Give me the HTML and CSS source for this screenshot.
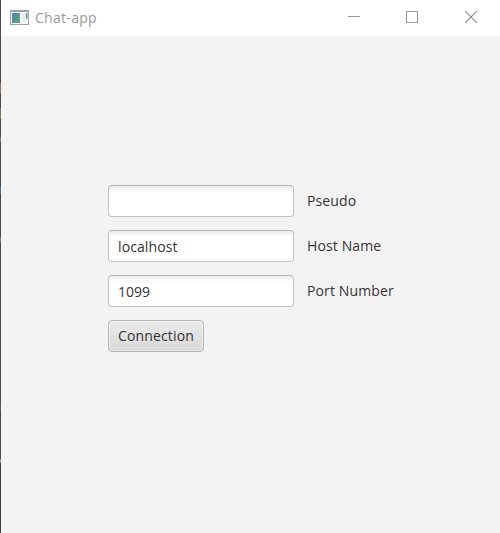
FILE: index.html
```html
<!DOCTYPE html>
<html lang="en">
<head>
<meta charset="utf-8">
<title>Chat-app</title>
<link rel="stylesheet" href="styles.css">
</head>
<body>
<div class="window">
  <header class="titlebar">
    <svg class="app-icon" width="19" height="15" viewBox="0 0 19 15">
      <defs><linearGradient id="tile" x1="0" y1="0" x2="1" y2="1"><stop offset="0" stop-color="#4f80ad"/><stop offset="1" stop-color="#5fa877"/></linearGradient></defs>
      <rect x=".5" y=".5" width="18" height="14" fill="#f6f8f9" stroke="#a0a3a9"/>
      <path d="M0 1h19" stroke="#a0a3a9" stroke-width="2"/>
      <rect x="2" y="3" width="8" height="10" fill="url(#tile)"/>
      <rect x="12" y="4" width="4" height="8" fill="#e7eaed"/>
      <rect x="16" y="3" width="1.5" height="6" fill="#5e9aa3"/>
    </svg>
    <span class="title">Chat-app</span>
    <div class="controls">
      <svg class="minimize" width="12" height="12" viewBox="0 0 12 12"><path d="M0 5.5h12" stroke="#999"/></svg>
      <svg width="12" height="12" viewBox="0 0 12 12"><rect x=".5" y=".5" width="11" height="11" fill="none" stroke="#999"/></svg>
      <svg width="12" height="12" viewBox="0 0 12 12"><path d="M0 0l12 12M12 0L0 12" stroke="#8c8c8c" stroke-width="1.1"/></svg>
    </div>
  </header>
  <main class="form">
    <input class="field" id="pseudo" type="text"><label class="label" for="pseudo">Pseudo</label>
    <input class="field host-field" id="host" type="text" value="localhost"><label class="label" for="host">Host Name</label>
    <input class="field" id="port" type="text" value="1099"><label class="label" for="port">Port Number</label>
    <button class="connect" type="button">Connection</button>
  </main>
</div>
</body>
</html>
```
FILE: styles.css
```css
* { box-sizing: border-box; }
body {
  margin: 0;
  height: 533px;
  padding-left: 1px;
  overflow: hidden;
  background: linear-gradient(#48494b 0 83px, #83715e 83px 94px, #48494b 94px 108px, #83715e 108px 119px, #48494b 119px 137px, #6e7c80 137px 142px, #48494b 142px 186px, #496c88 186px 194px, #48494b 194px 237px, #77746a 237px 242px, #48494b 242px 402px, #59595b 402px 412px, #48494b 412px 459px, #8290a0 459px 463px, #414143 463px);
  font: 14px/20px "Open Sans", "Noto Sans", sans-serif;
  color: #333;
}
.window { height: 533px; background: #f3f3f3; }
.titlebar {
  display: flex;
  align-items: center;
  height: 36px;
  padding: 0 23px 2px 9px;
  background: #fff;
}
.app-icon { margin-right: 6px; }
.title { padding-top: 2px; color: #999; letter-spacing: .3px; }
.controls { display: flex; gap: 47px; margin-left: auto; }
.controls svg { display: block; }
.controls .minimize { margin-right: -1px; }
.form {
  display: grid;
  grid-template-columns: 186px auto;
  grid-auto-rows: 32px;
  gap: 13px;
  padding: 149px 0 0 107px;
  align-items: center;
  justify-content: start;
}
.label { letter-spacing: .12px; }
.field {
  width: 186px;
  height: 32px;
  padding: 1px 9px 0;
  border: 1px solid #c2c2c2;
  border-top-color: #b4b4b4;
  border-radius: 4px;
  background: linear-gradient(#ececec, #fff 6px);
  font: inherit;
  color: inherit;
  outline: none;
}
.host-field { letter-spacing: .1px; }
.connect {
  width: 96px;
  height: 32px;
  padding: 0;
  border: 1px solid #b5b5b5;
  border-radius: 4px;
  background: linear-gradient(#ebebeb, #d9d9d9);
  box-shadow: inset 0 0 0 1px #ffffff66;
  font: inherit;
  letter-spacing: .15px;
  color: inherit;
}
```
